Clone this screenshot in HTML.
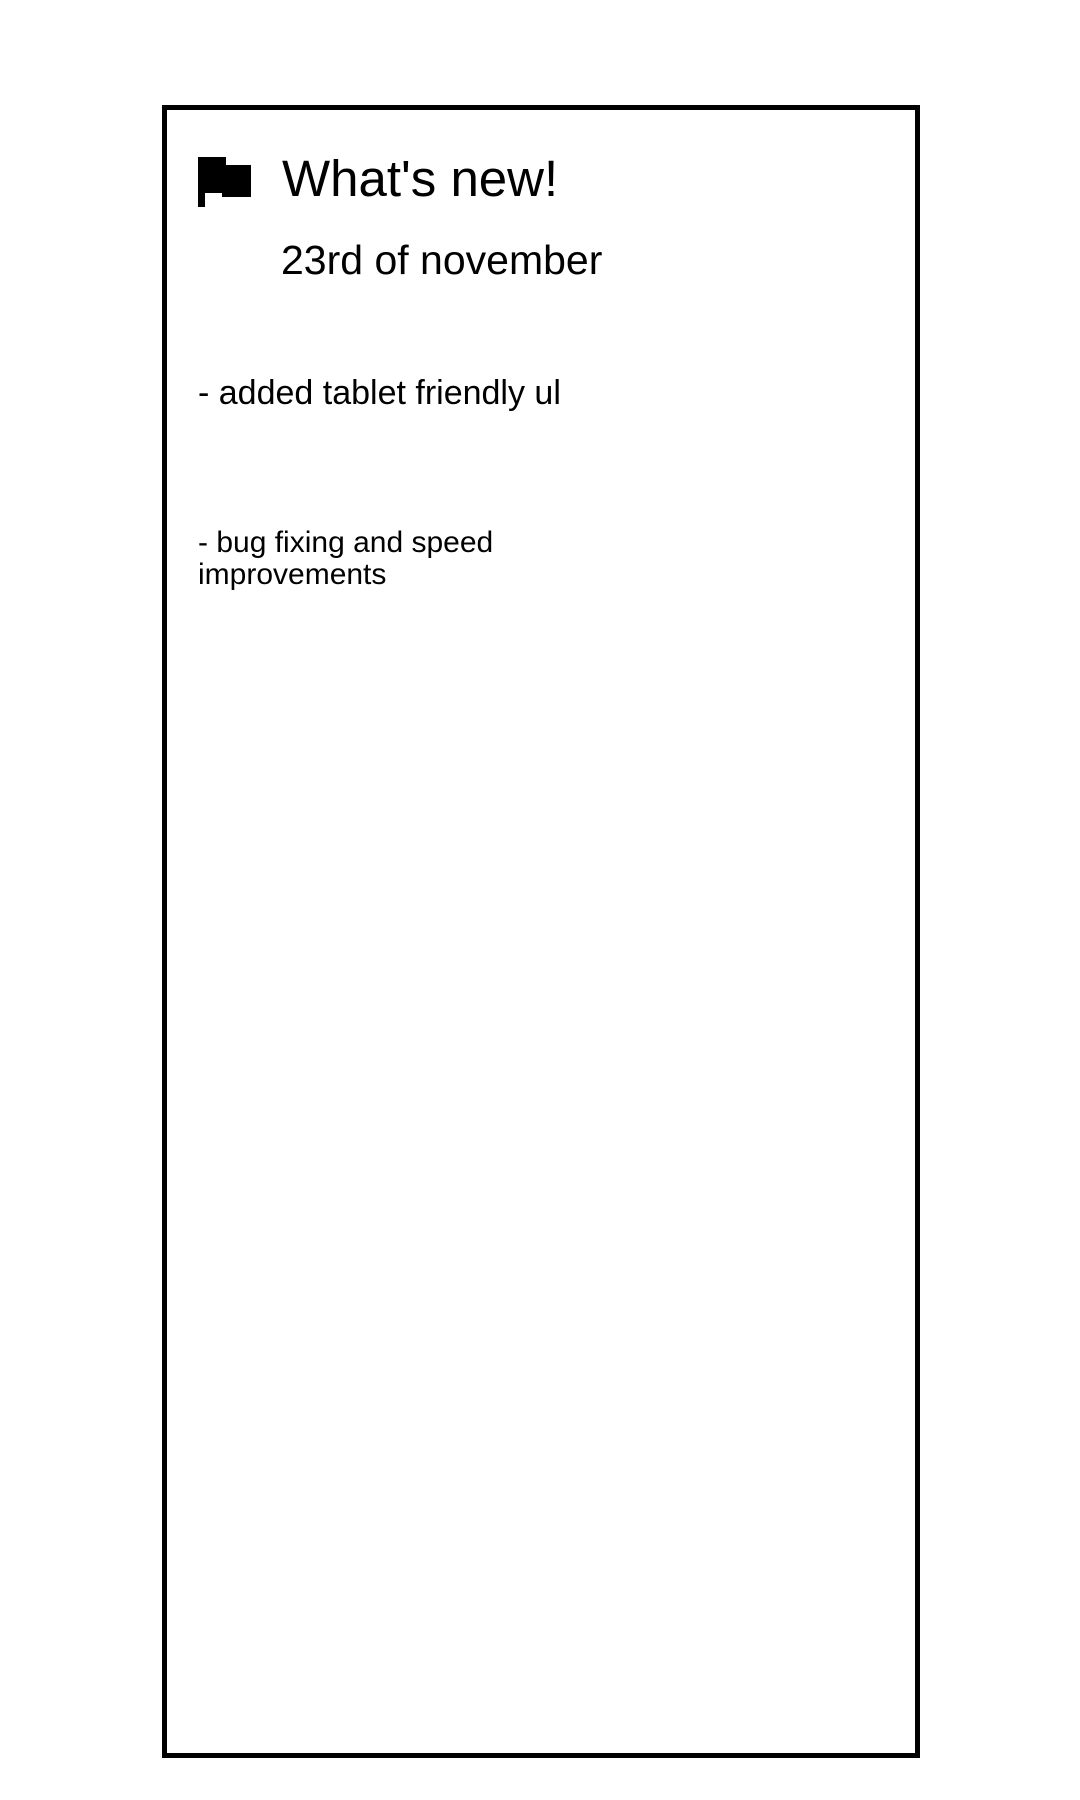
<!DOCTYPE html>
<html><head><style>
html,body{margin:0;padding:0;background:#fff;}
body{width:1080px;height:1800px;position:relative;font-family:"Liberation Sans",sans-serif;color:#000;}
.box{position:absolute;left:162px;top:105px;width:748px;height:1643px;border:5px solid #000;}
.t{position:absolute;white-space:nowrap;line-height:1;}
</style></head><body>
<div class="box"></div>
<svg style="position:absolute;left:0;top:0" width="300" height="230">
<path d="M198 157 H226 V165 H251 V197 H222 V193 H205 V207 H198 Z" fill="#000"/>
</svg>
<div class="t" style="left:282px;top:153px;font-size:51px;">What's new!</div>
<div class="t" style="left:281px;top:240px;font-size:41px;">23rd of november</div>
<div class="t" style="left:198px;top:376px;font-size:34px;">- added tablet friendly ul</div>
<div class="t" style="left:198px;top:527px;font-size:30px;line-height:32px;">- bug fixing and speed<br>improvements</div>
</body></html>
